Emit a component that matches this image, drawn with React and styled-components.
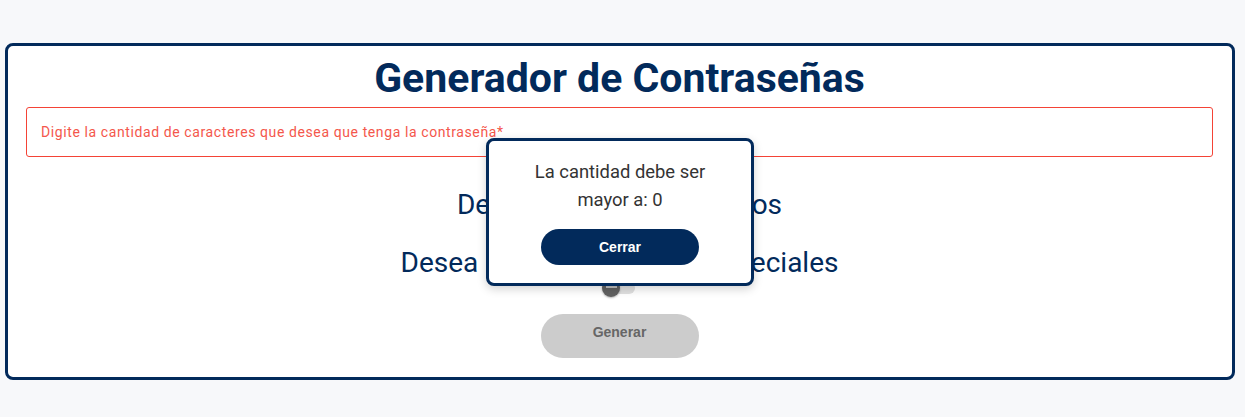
import React from "react";
import styled, { createGlobalStyle } from "styled-components";

const navy = "#022a5b";

const Global = createGlobalStyle`
  html, body { margin: 0; padding: 0; background: #f7f8fa; }
  body { font-family: Roboto, "Liberation Sans", sans-serif; }
  * { box-sizing: border-box; }
`;

const Page = styled.div`
  padding: 43px 10px 0 5px;
  height: 417px;
  position: relative;
`;

const Card = styled.main`
  background: #fff;
  border: 3px solid ${navy};
  border-radius: 8px;
  padding: 8px 19px 19px 18px;
  display: flex;
  flex-direction: column;
  align-items: center;
  position: relative;
`;

const Title = styled.h1`
  margin: 0;
  font-family: Roboto, sans-serif;
  font-weight: 700;
  font-size: 41px;
  line-height: 48px;
  color: ${navy};
`;

const Field = styled.input`
  margin-top: 5px;
  width: 100%;
  height: 50px;
  border: 1px solid #f44336;
  border-radius: 3px;
  padding: 0 14px;
  font-family: Roboto, sans-serif;
  font-size: 14px;
  letter-spacing: 0.6px;
  color: #f44336;
  outline: none;
  &::placeholder { color: #f4574c; opacity: 1; }
`;

const Options = styled.div`
  margin-top: 31px;
  display: flex;
  flex-direction: column;
  align-items: center;
`;

const Option = styled.div`
  height: 58px;
  display: flex;
  flex-direction: column;
  align-items: center;
`;

const Label = styled.span`
  font-size: 28px;
  line-height: 34px;
  color: ${navy};
`;

const Switch = styled.span`
  position: relative;
  width: 32px;
  height: 16px;
  display: block;
`;

const Track = styled.span`
  position: absolute;
  left: 1px;
  right: 0;
  top: 2px;
  height: 12px;
  border-radius: 6px;
  background: #e0e0e0;
`;

const Thumb = styled.span`
  position: absolute;
  left: -1px;
  top: -1px;
  width: 18px;
  height: 18px;
  border-radius: 50%;
  background: #616161;
  box-shadow: 0 1px 2px rgba(0,0,0,0.3);
  &::after {
    content: "";
    position: absolute;
    left: 4px;
    right: 3px;
    top: 6px;
    height: 3px;
    background: #bdbdbd;
  }
`;

const Button = styled.button`
  width: 158px;
  height: ${p => p.$h}px;
  border: none;
  border-radius: ${p => p.$h / 2}px;
  background: ${p => (p.$primary ? navy : "#cccccc")};
  color: ${p => (p.$primary ? "#fff" : "#666")};
  font-family: "Liberation Sans", Arial, sans-serif;
  font-weight: 700;
  font-size: 14px;
  cursor: pointer;
  padding: 0 0 ${p => p.$lift || 0}px;
`;

const GenerateButton = styled(Button)`
  margin-top: 10px;
`;

const Modal = styled.div`
  position: absolute;
  left: 486px;
  top: 138px;
  width: 268px;
  height: 148px;
  background: #fff;
  border: 3px solid ${navy};
  border-radius: 8px;
  box-shadow: 0 3px 10px rgba(0,0,0,0.18);
  padding: 17px 0 0;
  display: flex;
  flex-direction: column;
  align-items: center;
`;

const Message = styled.p`
  margin: 0 0 15px;
  text-align: center;
  font-size: 18.4px;
  line-height: 28px;
  color: #333;
`;

export default function App() {
  const options = [
    "Desea que tenga números",
    "Desea incluir caracteres especiales",
  ];
  return (
    <>
      <Global />
      <Page>
        <Card>
          <Title>Generador de Contraseñas</Title>
          <Field placeholder="Digite la cantidad de caracteres que desea que tenga la contraseña*" />
          <Options>
            {options.map(o => (
              <Option key={o}>
                <Label>{o}</Label>
                <Switch>
                  <Track />
                  <Thumb />
                </Switch>
              </Option>
            ))}
          </Options>
          <GenerateButton $h={44} $lift={8}>Generar</GenerateButton>
        </Card>
        <Modal>
          <Message>
            La cantidad debe ser
            <br />
            mayor a: 0
          </Message>
          <Button $primary $h={36}>Cerrar</Button>
        </Modal>
      </Page>
    </>
  );
}
